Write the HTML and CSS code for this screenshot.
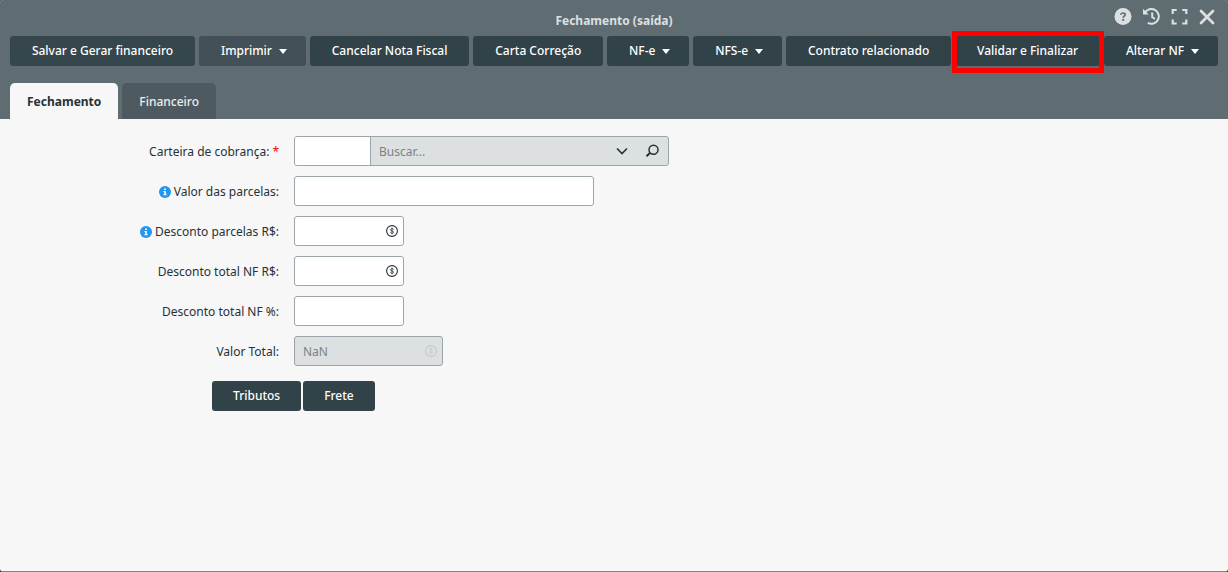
FILE: index.html
```html
<!DOCTYPE html>
<html lang="pt-BR">
<head>
<meta charset="utf-8">
<title>Fechamento (saída)</title>
<link rel="stylesheet" href="styles.css">
</head>
<body>
<svg class="defs" aria-hidden="true">
  <symbol id="coin" viewBox="0 0 12 12">
    <circle cx="6" cy="6" r="5.4" fill="none" stroke="currentColor" stroke-width="1.1"/>
    <path d="M7.700 4.500C7.400 3.900 6.700 3.700 6 3.700c-.9 0-1.600.4-1.600 1.100 0 1.600 3.300.8 3.300 2.400 0 .7-.8 1.100-1.700 1.100-.8 0-1.400-.3-1.700-.9M6 2.700v6.600" fill="none" stroke="currentColor" stroke-width=".8"/>
  </symbol>
  <symbol id="info" viewBox="0 0 12 12">
    <circle cx="6" cy="6" r="6" fill="#2196f3"/>
    <path d="M5.100 2.400h1.800v1.500H5.100zM4.400 5h2.500v3.200h.8v1.100H4.400V8.200h.8V6.100h-.8z" fill="#fff"/>
  </symbol>
</svg>
<main class="window">
  <header class="header">
    <div class="titlebar">
      <h1 class="title">Fechamento (saída)</h1>
      <div class="window-actions">
        <button class="icon-button" type="button" aria-label="Ajuda">
          <svg viewBox="0 0 18 18"><circle cx="9" cy="8.500" r="8.500" fill="currentColor"/><path d="M6.900 6.800C7 5.500 7.900 5 9.100 5c1.300 0 2.100.7 2.100 1.600 0 1.500-2 1.500-2 3.100" fill="none" stroke="#5f6b70" stroke-width="1.700"/><circle cx="9.200" cy="11.900" r="1.100" fill="#5f6b70"/></svg>
        </button>
        <button class="icon-button" type="button" aria-label="Histórico">
          <svg viewBox="0 0 18 18"><path d="M2.900 4.800A7.400 7.400 0 1 1 5.800 14.900M10.200 4.500v4.500l2.800 2" fill="none" stroke="currentColor" stroke-width="2"/><path d="M1 .8v5.700h5.700z" fill="currentColor"/></svg>
        </button>
        <button class="icon-button" type="button" aria-label="Tela cheia">
          <svg viewBox="0 0 18 18"><path d="M2.700 6V2h4M12.300 2h4v4M16.300 11.500v4h-4M6.700 15.500h-4v-4" fill="none" stroke="currentColor" stroke-width="2.200"/></svg>
        </button>
        <button class="icon-button" type="button" aria-label="Fechar">
          <svg viewBox="0 0 18 18"><path d="M3 3l12 12M15 3L3 15" fill="none" stroke="currentColor" stroke-width="2.800" stroke-linecap="round"/></svg>
        </button>
      </div>
    </div>
    <div class="toolbar">
      <button class="button button-first" type="button">Salvar e Gerar financeiro</button>
      <button class="button button-muted" type="button">Imprimir<span class="caret"></span></button>
      <button class="button" type="button">Cancelar Nota Fiscal</button>
      <button class="button" type="button">Carta Correção</button>
      <button class="button" type="button">NF-e<span class="caret"></span></button>
      <button class="button" type="button">NFS-e<span class="caret"></span></button>
      <button class="button" type="button">Contrato relacionado</button>
      <button class="button button-marked" type="button">Validar e Finalizar</button>
      <button class="button" type="button">Alterar NF<span class="caret"></span></button>
    </div>
    <div class="tabs" role="tablist">
      <button class="tab tab-active" type="button" role="tab" aria-selected="true">Fechamento</button>
      <button class="tab" type="button" role="tab" aria-selected="false">Financeiro</button>
    </div>
  </header>
  <form class="form">
    <div class="row">
      <label class="label" for="carteira">Carteira de cobrança: <span class="required">*</span></label>
      <div class="lookup">
        <input class="lookup-code" id="carteira" type="text">
        <div class="lookup-search">
          <input class="lookup-text" type="text" placeholder="Buscar..." aria-label="Buscar carteira">
          <button class="lookup-button" type="button" aria-label="Abrir lista"><svg class="lookup-icon" viewBox="0 0 14 14"><path d="M2 4.500l5 5 5-5" fill="none" stroke="currentColor" stroke-width="1.600"/></svg></button>
          <button class="lookup-button" type="button" aria-label="Pesquisar"><svg class="lookup-icon" viewBox="0 0 14 14"><circle cx="8.500" cy="5.700" r="4.500" fill="none" stroke="currentColor" stroke-width="1.500"/><path d="M5.200 8.800L1.500 12.300" fill="none" stroke="currentColor" stroke-width="2"/></svg></button>
        </div>
      </div>
    </div>
    <div class="row">
      <label class="label" for="parcelas"><svg class="info"><use href="#info"/></svg>Valor das parcelas:</label>
      <div class="field field-wide"><input class="input" id="parcelas" type="text"></div>
    </div>
    <div class="row">
      <label class="label" for="desc-parcelas"><svg class="info"><use href="#info"/></svg>Desconto parcelas R$:</label>
      <div class="field"><input class="input" id="desc-parcelas" type="text"><svg class="coin"><use href="#coin"/></svg></div>
    </div>
    <div class="row">
      <label class="label" for="desc-total">Desconto total NF R$:</label>
      <div class="field"><input class="input" id="desc-total" type="text"><svg class="coin"><use href="#coin"/></svg></div>
    </div>
    <div class="row">
      <label class="label" for="desc-pct">Desconto total NF %:</label>
      <div class="field"><input class="input" id="desc-pct" type="text"></div>
    </div>
    <div class="row">
      <label class="label" for="total">Valor Total:</label>
      <div class="field field-total"><input class="input" id="total" type="text" value="NaN" disabled><svg class="coin"><use href="#coin"/></svg></div>
    </div>
    <div class="form-actions">
      <button class="button" type="button">Tributos</button>
      <button class="button" type="button">Frete</button>
    </div>
  </form>
</main>
</body>
</html>
```

FILE: styles.css
```css
* {
  box-sizing: border-box;
}

body {
  margin: 0;
  background: #333;
  color: #263238;
  font-family: "Noto Sans", sans-serif;
  font-size: 12px;
  line-height: 18px;
}

button,
input {
  margin: 0;
  font: inherit;
}

.defs {
  display: none;
}

.window {
  display: flex;
  flex-direction: column;
  min-height: 100vh;
  overflow: hidden;
  border-bottom: 1px solid #78858c;
  border-radius: 3px;
  background: #f7f7f7;
}

.header {
  padding: 0 10px;
  background: #5f6c71;
}

.titlebar {
  display: grid;
  grid-template-columns: 1fr auto 1fr;
  height: 36px;
}

.title {
  grid-column: 2;
  margin: 0;
  padding-top: 12px;
  color: #dce0e1;
  font-size: 12px;
  font-weight: 700;
}

.window-actions {
  display: flex;
  justify-content: flex-end;
  gap: 10px;
  padding: 8px 2px 0 0;
}

.icon-button {
  width: 18px;
  height: 18px;
  padding: 0;
  border: 0;
  background: none;
  color: #dce0e1;
}

.icon-button svg {
  display: block;
}

.toolbar {
  display: flex;
  gap: 4px;
}

.toolbar .button {
  flex-grow: 1;
}

.button {
  display: flex;
  align-items: center;
  justify-content: center;
  height: 30px;
  padding: 0 21px;
  border: 0;
  border-radius: 3px;
  background: #324249;
  color: #fff;
  font-weight: 500;
  white-space: nowrap;
}

.button-first {
  background: #36464d;
}

.button-muted {
  background: #435057;
}

.button-marked {
  position: relative;
}

.button-marked::after {
  content: "";
  position: absolute;
  inset: -5px -4px -7px -3px;
  border: 5px solid #f00;
}

.caret {
  margin: 1px -3px 0 7px;
  border: 4px solid transparent;
  border-top: 5px solid #fff;
  border-bottom: 0;
}

.tabs {
  display: flex;
  gap: 4px;
  padding-top: 17px;
}

.tab {
  height: 36px;
  padding: 2px 17px 0;
  border: 0;
  border-radius: 5px 5px 0 0;
  background: #4e5a60;
  color: #eceeef;
  font-weight: 500;
}

.tab-active {
  background: #f7f7f7;
  color: #263238;
  font-weight: 700;
}

.form {
  display: flex;
  flex-direction: column;
  gap: 10px;
  padding: 17px 10px;
}

.row {
  display: flex;
  align-items: center;
  gap: 15px;
}

.label {
  display: flex;
  align-items: center;
  justify-content: flex-end;
  gap: 3px;
  width: 269px;
  padding-top: 2px;
}

.info {
  width: 12px;
  height: 12px;
}

.required {
  color: #f00;
}

.field {
  position: relative;
  width: 110px;
}

.field-wide {
  width: 300px;
}

.field-total {
  width: 149px;
}

.input {
  display: block;
  width: 100%;
  height: 30px;
  padding: 0 8px;
  border: 1px solid #9ba5aa;
  border-radius: 3px;
  background: #fff;
  color: inherit;
}

.input:disabled {
  background: #dce0e1;
  color: #78858a;
}

.coin {
  position: absolute;
  top: 9px;
  right: 6px;
  width: 12px;
  height: 12px;
}

.input:disabled + .coin {
  color: #c3c9cb;
}

.lookup {
  display: flex;
  width: 375px;
  height: 30px;
  overflow: hidden;
  border: 1px solid #9ba5aa;
  border-radius: 3px;
  background: #dce0e1;
}

.lookup-code {
  width: 76px;
  padding: 0 8px;
  border: 0;
  border-right: 1px solid #9ba5aa;
  background: #fff;
}

.lookup-search {
  display: flex;
  flex: 1;
  padding-right: 1px;
}

.lookup-text {
  flex: 1;
  min-width: 0;
  padding: 2px 8px 0;
  border: 0;
  background: none;
}

.lookup-text::placeholder {
  color: #7b8184;
}

.lookup-button {
  display: flex;
  align-items: center;
  justify-content: center;
  width: 30px;
  padding: 0;
  border: 0;
  background: none;
  color: #263238;
}

.lookup-icon {
  width: 14px;
  height: 14px;
}

.form-actions {
  display: flex;
  gap: 2px;
  padding: 5px 0 0 202px;
}
```
